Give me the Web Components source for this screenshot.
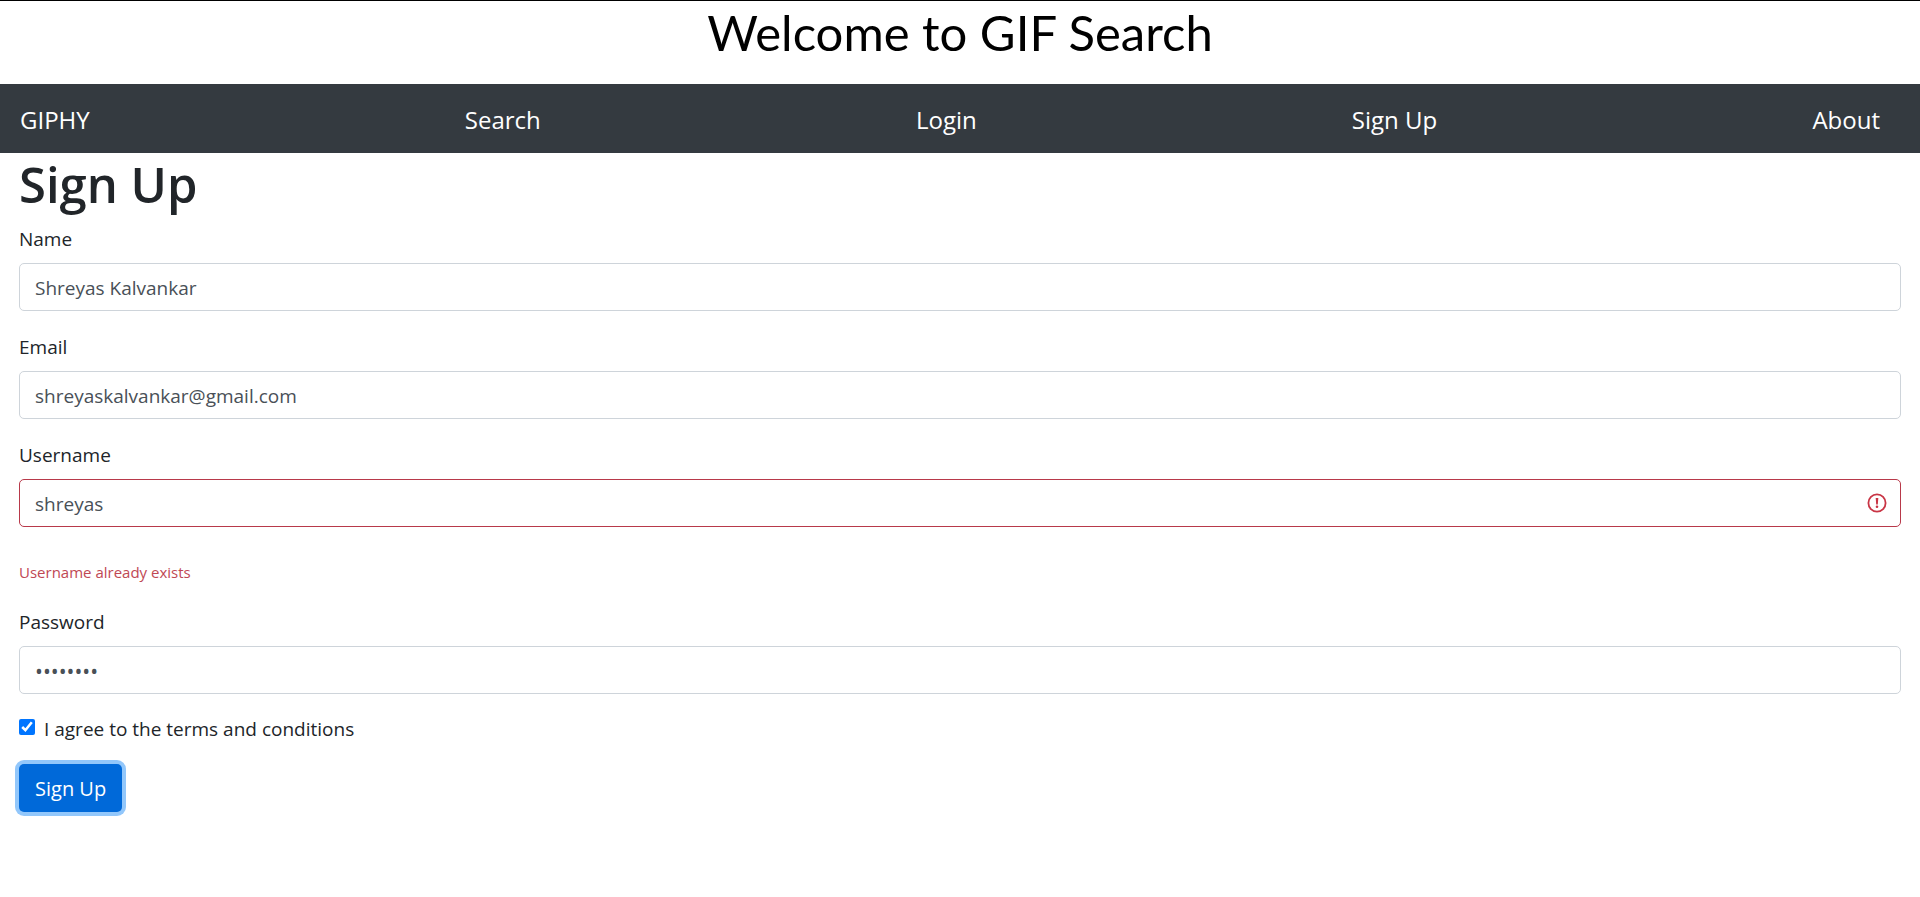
<!DOCTYPE html>
<html lang="en">
<head>
<meta charset="utf-8">
<meta name="viewport" content="width=device-width, initial-scale=1">
<title>Sign Up</title>
<style>
  body {
    margin: 0;
    background: #fff;
    color: #212529;
    font: 19px/30px "Segoe UI", "Open Sans", "Noto Sans", sans-serif;
  }
</style>
</head>
<body>
<site-banner>Welcome to GIF Search</site-banner>
<site-nav>
  <nav-link slot="brand" href="#giphy">GIPHY</nav-link>
  <nav-link href="#search">Search</nav-link>
  <nav-link href="#login">Login</nav-link>
  <nav-link href="#signup">Sign Up</nav-link>
  <nav-link href="#about">About</nav-link>
</site-nav>
<sign-up-form></sign-up-form>

<script>
class SiteBanner extends HTMLElement {
  constructor() {
    super();
    this.attachShadow({ mode: "open" }).innerHTML = `
      <style>
        :host { display: block; border-top: 1px solid #000; padding-bottom: 20px; }
        h1 {
          margin: 0; color: #000; text-align: center;
          font: 400 49px/63px "Comic Sans MS", Lato, sans-serif;
        }
      </style>
      <h1><slot></slot></h1>`;
  }
}

class NavLink extends HTMLElement {
  constructor() {
    super();
    this.attachShadow({ mode: "open" }).innerHTML = `
      <style>
        :host { display: block; }
        a { color: #fff; text-decoration: none; }
      </style>
      <a><slot></slot></a>`;
  }
  connectedCallback() {
    this.shadowRoot.querySelector("a").href = this.getAttribute("href");
  }
}

class SiteNav extends HTMLElement {
  constructor() {
    super();
    this.attachShadow({ mode: "open" }).innerHTML = `
      <style>
        :host { display: block; background: #343a40; }
        nav {
          display: flex; justify-content: space-between; flex-wrap: wrap;
          padding: 17px 40px 15px 20px; font-size: 24px; line-height: 37px;
        }
      </style>
      <nav><slot name="brand"></slot><slot></slot></nav>`;
  }
}

class FormField extends HTMLElement {
  constructor() {
    super();
    this.attachShadow({ mode: "open" }).innerHTML = `
      <style>
        :host { display: block; }
        label { display: block; margin-bottom: 8px; line-height: 32px; }
        .box { position: relative; }
        input {
          display: block; width: 100%; height: 48px; box-sizing: border-box;
          padding: 9px 15px 7px; border: 1px solid #ced4da; border-radius: 5px;
          background: #fff; color: #495057; font: inherit;
        }
        input[type="password"] { font-size: 21px; }
        svg { display: none; }
        :host([invalid]) input { border-color: #b8394a; padding-right: 48px; }
        :host([invalid]) svg {
          display: block; position: absolute; right: 14px; top: 14px;
          width: 20px; height: 20px;
        }
        p { margin: 32px 0 0; color: #c04854; font-size: 15px; line-height: 27px; }
        p:empty { display: none; }
      </style>
      <label for="control"></label>
      <div class="box">
        <input id="control">
        <svg viewBox="0 0 20 20" aria-hidden="true">
          <circle cx="10" cy="10" r="8.6" fill="none" stroke="#c93545" stroke-width="1.8"/>
          <path d="M8.7 5h2.6l-.5 6.4H9.2z" fill="#c93545"/>
          <circle cx="10" cy="13.8" r="1.3" fill="#c93545"/>
        </svg>
      </div>
      <p></p>`;
  }
  connectedCallback() {
    const root = this.shadowRoot;
    const input = root.querySelector("input");
    root.querySelector("label").textContent = this.getAttribute("label");
    root.querySelector("p").textContent = this.getAttribute("invalid") || "";
    input.type = this.getAttribute("type") || "text";
    input.value = this.getAttribute("value") || "";
    input.spellcheck = false;
  }
}

class SignUpForm extends HTMLElement {
  constructor() {
    super();
    this.attachShadow({ mode: "open" }).innerHTML = `
      <style>
        :host { display: block; padding: 0 19px 20px; }
        h2 { margin: 0 0 8px; font-size: 49px; font-weight: 600; line-height: 62px; }
        form { display: grid; gap: 20px; }
        .agree { display: flex; align-items: center; gap: 9px; }
        .agree input { width: 16px; height: 16px; margin: 0 0 4px; accent-color: #0075ff; }
        button {
          justify-self: start; height: 48px; padding: 2px 16px 0;
          border: 0; border-radius: 5px; background: #0069d9; color: #fff;
          font: inherit; font-size: 20px; box-shadow: 0 0 0 4px #92c7fb;
        }
      </style>
      <h2>Sign Up</h2>
      <form>
        <form-field label="Name" value="Shreyas Kalvankar"></form-field>
        <form-field label="Email" type="email" value="shreyaskalvankar@gmail.com"></form-field>
        <form-field label="Username" value="shreyas" invalid="Username already exists"></form-field>
        <form-field label="Password" type="password" value="password"></form-field>
        <div class="agree">
          <input type="checkbox" id="agree" checked>
          <label for="agree">I agree to the terms and conditions</label>
        </div>
        <button type="button">Sign Up</button>
      </form>`;
  }
}

customElements.define("site-banner", SiteBanner);
customElements.define("nav-link", NavLink);
customElements.define("site-nav", SiteNav);
customElements.define("form-field", FormField);
customElements.define("sign-up-form", SignUpForm);
</script>
</body>
</html>
